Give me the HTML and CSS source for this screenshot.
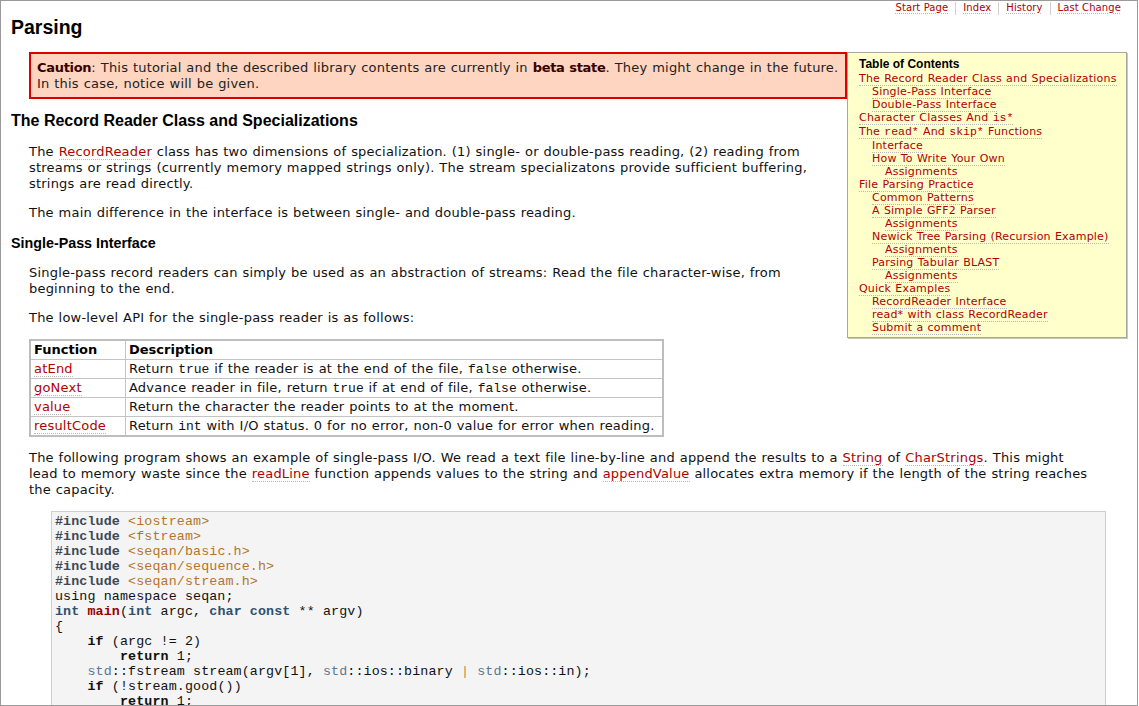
FILE: index.html
```html
<!DOCTYPE html>
<html>
<head>
<meta charset="utf-8">
<title>Parsing</title>
<link rel="stylesheet" href="styles.css">
</head>
<body>
<div class="page">
  <nav class="topnav">
    <a href="#">Start Page</a><a href="#">Index</a><a href="#">History</a><a href="#">Last Change</a>
  </nav>
  <h1>Parsing</h1>
  <div class="toc">
    <h4>Table of Contents</h4>
    <ul>
      <li><a href="#">The Record Reader Class and Specializations</a>
        <ul>
          <li><a href="#">Single-Pass Interface</a></li>
          <li><a href="#">Double-Pass Interface</a></li>
        </ul>
      </li>
      <li class="tall"><a href="#">Character Classes And <code>is*</code></a></li>
      <li><div class="tall"><a href="#">The <code>read*</code> And <code>skip*</code> Functions</a></div>
        <ul>
          <li><a href="#">Interface</a></li>
          <li><a href="#">How To Write Your Own</a>
            <ul><li><a href="#">Assignments</a></li></ul>
          </li>
        </ul>
      </li>
      <li><a href="#">File Parsing Practice</a>
        <ul>
          <li><a href="#">Common Patterns</a></li>
          <li><a href="#">A Simple GFF2 Parser</a>
            <ul><li><a href="#">Assignments</a></li></ul>
          </li>
          <li><a href="#">Newick Tree Parsing (Recursion Example)</a>
            <ul><li><a href="#">Assignments</a></li></ul>
          </li>
          <li><a href="#">Parsing Tabular BLAST</a>
            <ul><li><a href="#">Assignments</a></li></ul>
          </li>
        </ul>
      </li>
      <li><a href="#">Quick Examples</a>
        <ul>
          <li><a href="#">RecordReader Interface</a></li>
          <li><a href="#">read* with class RecordReader</a></li>
          <li><a href="#">Submit a comment</a></li>
        </ul>
      </li>
    </ul>
  </div>
  <div class="caution"><strong>Caution</strong>: This tutorial and the described library contents are currently in <strong>beta state</strong>. They might change in the future. In this case, notice will be given.</div>

  <h2>The Record Reader Class and Specializations</h2>
  <p>The <a href="#">RecordReader</a> class has two dimensions of specialization. (1) single- or double-pass reading, (2) reading from streams or strings (currently memory mapped strings only). The stream specializatons provide sufficient buffering, strings are read directly.</p>
  <p>The main difference in the interface is between single- and double-pass reading.</p>

  <h3>Single-Pass Interface</h3>
  <p>Single-pass record readers can simply be used as an abstraction of streams: Read the file character-wise, from beginning to the end.</p>
  <p>The low-level API for the single-pass reader is as follows:</p>

  <table class="api">
    <tr><th class="c1">Function</th><th>Description</th></tr>
    <tr><td><a href="#">atEnd</a></td><td>Return <code>true</code> if the reader is at the end of the file, <code>false</code> otherwise.</td></tr>
    <tr><td><a href="#">goNext</a></td><td>Advance reader in file, return <code>true</code> if at end of file, <code>false</code> otherwise.</td></tr>
    <tr><td><a href="#">value</a></td><td>Return the character the reader points to at the moment.</td></tr>
    <tr><td><a href="#">resultCode</a></td><td>Return <code>int</code> with I/O status. 0 for no error, non-0 value for error when reading.</td></tr>
  </table>

  <p class="p-after">The following program shows an example of single-pass I/O. We read a text file line-by-line and append the results to a <a href="#">String</a> of <a href="#">CharStrings</a>. This might lead to memory waste since the <a href="#">readLine</a> function appends values to the string and <a href="#">appendValue</a> allocates extra memory if the length of the string reaches the capacity.</p>

<pre class="code"><span class="pp">#include</span> <span class="inc">&lt;iostream&gt;</span>
<span class="pp">#include</span> <span class="inc">&lt;fstream&gt;</span>
<span class="pp">#include</span> <span class="inc">&lt;seqan/basic.h&gt;</span>
<span class="pp">#include</span> <span class="inc">&lt;seqan/sequence.h&gt;</span>
<span class="pp">#include</span> <span class="inc">&lt;seqan/stream.h&gt;</span>
using namespace seqan;
<span class="ty">int</span> <span class="fn">main</span>(<span class="ty">int</span> argc, <span class="ty">char const</span> ** argv)
{
    <span class="kw">if</span> (argc != 2)
        <span class="kw">return</span> 1;
    <span class="ns">std</span>::fstream stream(argv[1], <span class="ns">std</span>::ios::binary <span class="op">|</span> <span class="ns">std</span>::ios::in);
    <span class="kw">if</span> (!stream.good())
        <span class="kw">return</span> 1;
</pre>
</div>
</body>
</html>
```
FILE: styles.css
```css
html, body {
  margin: 0;
  padding: 0;
  background: #fff;
}

body {
  font-family: "DejaVu Sans", Verdana, sans-serif;
  font-size: 13px;
  line-height: 16px;
  letter-spacing: 0.2px;
  word-spacing: 0.5px;
  color: #111;
}

.page {
  box-sizing: border-box;
  width: 1138px;
  height: 706px;
  border: 1px solid #9a9a9a;
  padding: 0 10px;
  overflow: hidden;
}

a {
  color: #b00000;
  text-decoration: none;
  border-bottom: 1px dotted #b8b8b8;
}

code {
  font-family: "Liberation Mono", "Courier New", monospace;
  font-size: 13px;
  letter-spacing: 0;
  word-spacing: 0;
  line-height: 1;
}

/* top navigation */
.topnav {
  display: flex;
  justify-content: flex-end;
  height: 13px;
  padding-top: 1px;
  font-size: 10px;
  line-height: 12px;
  letter-spacing: 0.1px;
  word-spacing: 0;
}

.topnav a {
  padding: 0 7px;
  border-bottom: none;
  border-left: 1px solid #d0d0d0;
  text-decoration: underline dotted #b8b8b8;
  text-underline-offset: 2px;
}

.topnav a:first-child {
  border-left: none;
}

.topnav a:last-child {
  padding-right: 6px;
}

h1 {
  margin: 0;
  font: bold 19.5px/24px "Liberation Sans", Arial, sans-serif;
  letter-spacing: 0;
  word-spacing: 0;
  color: #000;
}

/* table of contents */
.toc {
  float: right;
  box-sizing: border-box;
  width: 280px;
  margin-top: 13px;
  padding: 4px 0 3px 11px;
  background: #ffffcc;
  border: 1px solid #a8a8a0;
  box-shadow: 1px 1px 0 #c8c8b8;
  font-size: 11px;
  line-height: 13px;
}

.toc h4 {
  margin: 0 0 1px;
  font: bold 12px/14px "Liberation Sans", Arial, sans-serif;
  letter-spacing: 0;
  word-spacing: 0;
  color: #000;
}

.toc ul {
  list-style: none;
  margin: 0;
  padding: 0;
}

.toc ul ul {
  padding-left: 13px;
}

.toc .tall {
  line-height: 14px;
}

.toc code {
  font-size: 11.5px;
}

/* caution box */
.caution {
  overflow: hidden;
  margin: 13px 0 0 18px;
  padding: 6px 4px 5px 6px;
  border: 2px solid #dd0000;
  background: #fdd5c1;
  color: #222;
}

.caution strong {
  color: #3a0000;
  letter-spacing: -0.3px;
}

h2 {
  margin: 12px 0 0;
  font: bold 16px/20px "Liberation Sans", Arial, sans-serif;
  letter-spacing: 0;
  word-spacing: 0;
  color: #000;
}

h3 {
  margin: 13px 0 0;
  font: bold 14.3px/18px "Liberation Sans", Arial, sans-serif;
  letter-spacing: 0;
  word-spacing: 0;
  color: #000;
}

p {
  margin: 13px 34px 0 18px;
}

/* api table */
.api {
  margin: 13px 0 0 18px;
  width: 635px;
  border-collapse: collapse;
  border: 2px solid #bdbdbd;
}

.api th,
.api td {
  border: 1px solid #c4c4c4;
  padding: 1px 4px 1px 3px;
  text-align: left;
  line-height: 16px;
  font-size: 13px;
}

.api th {
  font-weight: bold;
  color: #000;
  letter-spacing: 0;
}

.api .c1 {
  width: 87px;
}

/* code listing */
.code {
  margin: 13px 21px 0 40px;
  padding: 2px 3px;
  border: 1px solid #cfcfcf;
  background: #f4f4f4;
  font-family: "Liberation Mono", "Courier New", monospace;
  font-size: 13.33px;
  line-height: 15px;
  letter-spacing: 0.12px;
  word-spacing: 0;
  color: #111;
}

.code .pp { color: #3f4955; font-weight: bold; }
.code .inc { color: #b5742c; }
.code .ty { color: #2f5070; font-weight: bold; }
.code .fn { color: #990000; font-weight: bold; }
.code .kw { color: #111; font-weight: bold; }
.code .ns { color: #5a7894; }
.code .op { color: #c08848; }
```
